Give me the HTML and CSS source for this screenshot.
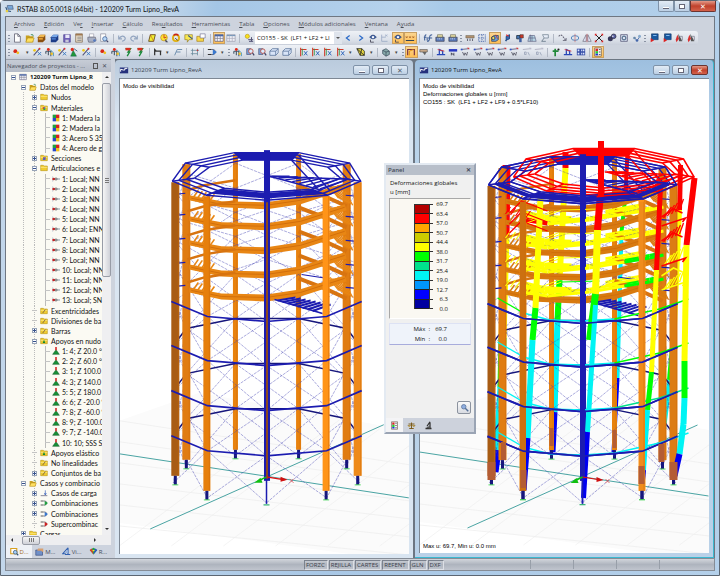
FILE: index.html
```html
<!DOCTYPE html>
<html lang="es">
<head>
<meta charset="utf-8">
<title>RSTAB 8.05.0018 (64bit) - 120209 Turm Lipno_RevA</title>
<link rel="stylesheet" href="styles.css">
</head>
<body>
<svg class="defs" aria-hidden="true">
  <symbol id="new" viewBox="0 0 12 12"><path d="M3 1h4l3 3v7H3z" fill="#fff" stroke="#667"/><path d="M7 1v3h3" fill="none" stroke="#667"/></symbol>
  <symbol id="open" viewBox="0 0 12 12"><path d="M1 3h4l1 1h4v7H1z" fill="#c8a020"/><path d="M3 6h8l-2 5H1z" fill="#ffe060" stroke="#a88010" stroke-width=".6"/><path d="M7 2q3-1 3 2" fill="none" stroke="#385"/></symbol>
  <symbol id="boxo" viewBox="0 0 12 12"><path d="M1 5l3-3h6v6l-3 3H1z" fill="#8a5010"/><path d="M1 5l3-3h6L8 5z" fill="#f0b850"/><path d="M2 6h5v2H2z" fill="#e8a030"/></symbol>
  <symbol id="boxb" viewBox="0 0 12 12"><path d="M1 5l3-3h6v6l-3 3H1z" fill="#1c3c88"/><path d="M1 5l3-3h6L8 5z" fill="#78a8e8"/><path d="M2 6h5v2H2z" fill="#4878c8"/></symbol>
  <symbol id="save" viewBox="0 0 12 12"><path d="M2 2h8v9H2z" fill="#7060b8" stroke="#443888" stroke-width=".7"/><path d="M4 2h5v4H4z" fill="#e8e8f8"/><path d="M4 8h4v3H4z" fill="#c8c8d8"/></symbol>
  <symbol id="clip" viewBox="0 0 12 12"><path d="M2 1h8v10H2z" fill="#e8dcc8" stroke="#786048" stroke-width=".8"/><path d="M2 1h8v2H2z" fill="#a07850"/><path d="M4 5h5M4 7h5M4 9h5" stroke="#888"/></symbol>
  <symbol id="print" viewBox="0 0 12 12"><path d="M3 1h5v4H3z" fill="#fff" stroke="#889" stroke-width=".6"/><path d="M1 5h9l1 4-3 2H2L1 8z" fill="#a8b0c4" stroke="#556" stroke-width=".7"/><circle cx="9" cy="9" r="1.6" fill="#557ac0"/></symbol>
  <symbol id="preview" viewBox="0 0 12 12"><path d="M2 1h6v9H2z" fill="#fff" stroke="#778" stroke-width=".7"/><circle cx="7" cy="7" r="2.6" fill="#b8d8f8" stroke="#46689c"/><path d="M9 9l2 2" stroke="#446" stroke-width="1.4"/></symbol>
  <symbol id="undo" viewBox="0 0 12 12"><path d="M2 3v4h4M2 7q5-6 8-1q0 3-4 4" fill="none" stroke="#93a5c0" stroke-width="1.3"/></symbol>
  <symbol id="redo" viewBox="0 0 12 12"><path d="M10 3v4H6M10 7Q5 1 2 6q0 3 4 4" fill="none" stroke="#93a5c0" stroke-width="1.3"/></symbol>
  <symbol id="para" viewBox="0 0 12 12"><path d="M4 2h6L8 10H2z" fill="#f0f030" stroke="#604010"/><path d="M4 2l4 8" stroke="#c03020" stroke-width=".6"/></symbol>
  <symbol id="sun" viewBox="0 0 12 12"><circle cx="6" cy="5.500" r="4" fill="#ffe030" stroke="#b89020" stroke-width=".8"/><path d="M6 2v4l3-1" stroke="#c03020" fill="none"/><path d="M7 7l4 4-3 0z" fill="#445"/></symbol>
  <symbol id="ring" viewBox="0 0 12 12"><circle cx="6" cy="6" r="3.700" fill="none" stroke="#e0b010" stroke-width="2.200"/><path d="M3 3q3-3 6 0" fill="none" stroke="#c82018" stroke-width="1.600"/><path d="M5 6l3 3" stroke="#333"/></symbol>
  <symbol id="note" viewBox="0 0 12 12"><path d="M1 2h9v6H6l-2 3V8H1z" fill="#f8e850" stroke="#887020" stroke-width=".7"/><path d="M5 3l5 4" stroke="#358" stroke-width="1.300"/></symbol>
  <symbol id="fwin" viewBox="0 0 12 12"><path d="M1 4h8v6H1z" fill="#f8d848" stroke="#a88018" stroke-width=".8"/><path d="M5 1h6v5H5z" fill="#fff" stroke="#668" stroke-width=".7"/></symbol>
  <symbol id="table" viewBox="0 0 12 12"><path d="M1 2h10v8H1z" fill="#f8f8ff" stroke="#557" stroke-width=".8"/><path d="M1 3h10" stroke="#46a" stroke-width="2"/><path d="M4 3v7M7.500 3v7M1 6.500h10" stroke="#778" stroke-width=".8"/></symbol>
  <symbol id="tablex" viewBox="0 0 12 12"><path d="M1 2h10v8H1z" fill="#eef0f6" stroke="#99a" stroke-width=".8"/><path d="M1 3h10" stroke="#79b" stroke-width="1.500"/><path d="M4 3v7M7.500 3v7M1 6.500h10" stroke="#aab" stroke-width=".8"/></symbol>
  <symbol id="lamp" viewBox="0 0 12 12"><circle cx="4" cy="4" r="2.500" fill="#f8e020" stroke="#a80" stroke-width=".6"/><path d="M5 8h6M6 10h5M9 5v5" stroke="#557" stroke-width="1.200"/></symbol>
  <symbol id="prev" viewBox="0 0 12 12"><path d="M8 3L4 6l4 3" fill="none" stroke="#2868c8" stroke-width="1.400"/></symbol>
  <symbol id="next" viewBox="0 0 12 12"><path d="M4 3l4 3-4 3" fill="none" stroke="#2868c8" stroke-width="1.400"/></symbol>
  <symbol id="eye" viewBox="0 0 12 12"><path d="M2 5q4-5 8 0q-4 4-8 0z" fill="#4868a8" stroke="#223c70" stroke-width=".8"/><circle cx="6" cy="5" r="1.300" fill="#fff"/><path d="M3 8v3h4" stroke="#445" fill="none"/></symbol>
  <symbol id="val" viewBox="0 0 12 12"><path d="M1 4l2 2M3 4L1 6M5 4l2 2M7 4L5 6M9 4l2 2M11 4L9 6" stroke="#a05820" stroke-width=".9"/><path d="M1 9h10" stroke="#345" stroke-width="1.200"/></symbol>
  <symbol id="xy" viewBox="0 0 12 12"><path d="M2 2v8h7M2 5h5" stroke="#9aaac4" fill="none"/><path d="M6 2l3 2M9 2L6 4" stroke="#9aaac4" stroke-width=".8"/></symbol>
  <symbol id="fx" viewBox="0 0 12 12"><path d="M4 2q-2 0-2 4v3M1 5h3M5 10q3 0 3-5q0-3 3-3M6 6h5M5 5v4" fill="none" stroke="#406098" stroke-width="1.300"/></symbol>
  <symbol id="cast" viewBox="0 0 12 12"><path d="M1 5h10v5H1z" fill="#5878b8" stroke="#334" stroke-width=".7"/><path d="M3 2h6v3H3z" fill="#e0d8a0" stroke="#554" stroke-width=".6"/><path d="M3 7h6" stroke="#fff" stroke-dasharray="1 1"/></symbol>
  <symbol id="wall" viewBox="0 0 12 12"><path d="M1 3h10v3H1z" fill="#b09070" stroke="#554" stroke-width=".5"/><path d="M3 7v3M6 7v3M9 7v3" stroke="#445" stroke-width="1.300" stroke-dasharray="1 .6"/></symbol>
  <symbol id="frame" viewBox="0 0 12 12"><path d="M2 2h8v8H2zM2 6h8M6 2v8" fill="none" stroke="#46a" stroke-dasharray="1.500 1"/></symbol>
  <symbol id="glass" viewBox="0 0 12 12"><path d="M2 5l3-2h5v5l-3 2H2z" fill="#68a0d8" stroke="#235" stroke-width=".8"/><circle cx="4" cy="6" r="2" fill="#e8e060" stroke="#335"/><path d="M7 2l2 5" stroke="#c33"/></symbol>
  <symbol id="bee" viewBox="0 0 12 12"><path d="M5 10V4l4-2v5l-5 2" fill="#3868b0" stroke="#123c78"/><path d="M5 2l3 2" stroke="#d33" stroke-width="1.500"/></symbol>
  <symbol id="cubes" viewBox="0 0 12 12"><path d="M2 3h4v4H2z" fill="#4878b8" stroke="#234"/><path d="M6 2h4v4H6z" fill="#c83828" stroke="#333" stroke-width=".6"/><path d="M5 6h3v5H5z" fill="#4060a0"/></symbol>
  <symbol id="grid" viewBox="0 0 12 12"><path d="M3 3h6l2 7H1zM6 3v7M2 6h8M4 2v8" fill="#b8d8e8" stroke="#557" stroke-width=".7"/></symbol>
  <symbol id="flag" viewBox="0 0 12 12"><path d="M3 2h7v4H5z" fill="#e8eef8" stroke="#678" stroke-width=".8"/><path d="M5 6l-3 4h5" fill="none" stroke="#678"/></symbol>
  <symbol id="chain" viewBox="0 0 12 12"><path d="M2 4q3-3 5 0t4 5" fill="none" stroke="#667" stroke-dasharray="2 1" stroke-width="1.300"/><path d="M7 9h4V6" fill="none" stroke="#667"/></symbol>
  <symbol id="rot" viewBox="0 0 12 12"><ellipse cx="6" cy="6" rx="4.500" ry="2.800" fill="none" stroke="#5888c0" stroke-width="1.200"/><path d="M6 1v10" stroke="#c66" stroke-width=".8"/></symbol>
  <symbol id="mirror" viewBox="0 0 12 12"><path d="M5 2v8H1zM7 2v8h4z" fill="#eef" stroke="#667" stroke-width=".8"/><path d="M6 1v10" stroke="#c44" stroke-width=".7"/></symbol>
  <symbol id="cross" viewBox="0 0 12 12"><path d="M2 2l8 8M10 2l-8 8" stroke="#222" stroke-width="1.200"/><path d="M1 1h2v2H1zM9 1h2v2H9zM1 9h2v2H1zM9 9h2v2H9z" fill="#d22"/></symbol>
  <symbol id="balls" viewBox="0 0 12 12"><circle cx="4" cy="7" r="3" fill="#383858"/><circle cx="8" cy="4" r="2.800" fill="#5860a0" stroke="#223" stroke-width=".8"/><circle cx="7" cy="4" r="1" fill="#dde"/></symbol>
  <symbol id="swirl" viewBox="0 0 12 12"><path d="M2 2h8v8H2z" fill="#d8e0f0" stroke="#446" stroke-width=".8"/><circle cx="6" cy="6" r="2.300" fill="none" stroke="#246"/></symbol>
  <symbol id="nodes" viewBox="0 0 12 12"><path d="M3 6l3 3 3-4" stroke="#46a" fill="none"/><circle cx="3" cy="6" r="1.600" fill="#68a"/><circle cx="6" cy="9" r="1.600" fill="#46a"/><circle cx="9" cy="4" r="1.800" fill="#8ac"/></symbol>
  <symbol id="mon" viewBox="0 0 12 12"><path d="M3 1h8v7H3z" fill="#1858a0" stroke="#0c3060" stroke-width=".7"/><path d="M5 3h4" stroke="#9cf"/><path d="M2 6l4 3-4 2z" fill="#d22"/></symbol>
  <symbol id="pin" viewBox="0 0 12 12"><path d="M5 1l3 5 2 4H6z" fill="#555"/><path d="M4 2l2 5-3 4-1-3z" fill="#d83030"/><path d="M7 4h3v5" stroke="#889" fill="none"/></symbol>
  <symbol id="node" viewBox="0 0 12 12"><circle cx="4" cy="5" r="2.300" fill="#d82818"/><circle cx="7" cy="7" r="1.600" fill="#f0c020"/></symbol>
  <symbol id="barx" viewBox="0 0 12 12"><path d="M2 10L9 2" stroke="#557" stroke-width="1.300"/><circle cx="3" cy="4" r="1.600" fill="#f0c818"/><path d="M7 6l4 4M11 6l-4 4" stroke="#3878c0" stroke-width="1.100"/><circle cx="9" cy="2" r="1.200" fill="#d33"/></symbol>
  <symbol id="sup" viewBox="0 0 12 12"><path d="M5 4l4 7H2z" fill="#209838" stroke="#155" stroke-width=".5"/><circle cx="4" cy="3" r="2" fill="#d83020"/><path d="M6 2l4 3" stroke="#357"/></symbol>
  <symbol id="struct" viewBox="0 0 12 12"><path d="M1 5h6v6M1 5v3M4 5v5" stroke="#456" fill="none" stroke-width="1.300"/><path d="M6 3l4 4v4" stroke="#38a" fill="none"/><circle cx="4" cy="3" r="1.700" fill="#e02818"/><circle cx="8" cy="8" r="1.500" fill="#f0c020"/></symbol>
  <symbol id="bolt" viewBox="0 0 12 12"><path d="M3 2h6L6 6h2l-3 5" fill="none" stroke="#188838" stroke-width="1.600"/><path d="M3 1h6v3H3z" fill="#d83020"/></symbol>
  <symbol id="dim" viewBox="0 0 12 12"><path d="M2 10V3l2 2h5v5M2 5h8" stroke="#333" fill="none" stroke-width="1.500"/></symbol>
  <symbol id="lin" viewBox="0 0 12 12"><path d="M2 10l3-7h6M4 6h5" stroke="#68a" fill="none" stroke-width="1.100"/></symbol>
  <symbol id="sel" viewBox="0 0 12 12"><path d="M3 2v8M9 2v8M1 4h10M1 8h8" stroke="#689" fill="none" stroke-width=".9"/><circle cx="9" cy="4" r="1" fill="#c33"/></symbol>
  <symbol id="comb" viewBox="0 0 12 12"><path d="M1 3h4M1 9h4" stroke="#333" stroke-width="1.200"/><path d="M5 3h2q3 0 3 3t-3 3H5" fill="none" stroke="#445"/><path d="M7 3l5 3-5 4z" fill="var(--c, #3878d0)"/></symbol>
  <symbol id="mag" viewBox="0 0 12 12"><path d="M2 2h5v7H2z" fill="#78a0d8" stroke="#335" stroke-width=".6"/><circle cx="7" cy="5" r="2.700" fill="#d8ecff" stroke="#c04838"/><path d="M9 7l2 3" stroke="#446" stroke-width="1.500"/></symbol>
  <symbol id="cube" viewBox="0 0 12 12"><path d="M1 5l3-3h7v5l-3 3H1zM1 5h7v5M8 5l3-3" fill="#d8e4f8" stroke="#557098" stroke-width=".9"/></symbol>
  <symbol id="axis" viewBox="0 0 12 12"><path d="M2 1v10M2 3h7" stroke="#d03828" fill="none" stroke-width="1.300"/><path d="M4 2v8" stroke="#309848"/><path d="M6 5l4 5M10 5l-4 5" stroke="#2860b8" stroke-width="1.100"/></symbol>
  <symbol id="pers" viewBox="0 0 12 12"><path d="M1 2h6l3 3v5H5z" fill="#e8d840" stroke="#332"/><path d="M1 2l9 8M7 2L5 10" stroke="#222"/></symbol>
  <symbol id="rend" viewBox="0 0 12 12"><path d="M2 4l4-2 4 3v4l-4 2-4-3z" fill="#8aa" stroke="#345" stroke-width=".8"/><path d="M2 4l4 2 4-1M6 6v5" stroke="#345" stroke-width=".8" fill="none"/></symbol>
  <symbol id="portal" viewBox="0 0 12 12"><path d="M2 10V3h8v7" fill="none" stroke="#734" stroke-width="1.400"/><path d="M4 10V5l5-2" fill="none" stroke="#d80"/></symbol>
  <symbol id="load" viewBox="0 0 12 12"><path d="M1 3h9v3H1z" fill="#c8a888" stroke="#555" stroke-width=".7"/><path d="M4 6l3 4 2-4" fill="#666"/></symbol>
  <symbol id="res" viewBox="0 0 12 12"><path d="M1 3l10-1" stroke="#557"/><path d="M8 1h3v2z" fill="#d33"/><path d="M1 2h2v2H1z" fill="#35c"/><path d="M3 6l2 4 1-3 2 3 1-4" fill="none" stroke="#445" stroke-width=".9"/></symbol>
  <symbol id="resg" viewBox="0 0 12 12"><path d="M1 3l10-1" stroke="#aab"/><path d="M8 1h3v2z" fill="#bbc"/><path d="M3 6h2v3H3zM7 6l2 4" fill="none" stroke="#9aa4b8"/></symbol>
  <symbol id="beamt" viewBox="0 0 12 12"><path d="M1 9h10M4 9V3l4 2v4" stroke="#2848b8" fill="none" stroke-width="1.500"/><path d="M2 3l8 2" stroke="#d33"/></symbol>
  <symbol id="beamn" viewBox="0 0 12 12"><path d="M1 4h10" stroke="#2838c0" stroke-width="3"/><path d="M4 10V7l3 3V7" stroke="#334" fill="none"/></symbol>
  <symbol id="plus" viewBox="0 0 12 12"><path d="M5 2v9M2 5h7" stroke="#208838" stroke-width="2"/><circle cx="9" cy="3" r="1.300" fill="#222"/></symbol>
  <symbol id="tiles" viewBox="0 0 12 12"><path d="M1 2h10v8H1z" fill="#3850a8"/><path d="M2 3h2v2H2zM6 3h1v2H6zM8 3h2v2H8zM2 7h2v2H2zM6 7h1v2H6zM8 7h2v2H8z" fill="#dde6ff"/></symbol>
  <symbol id="legend" viewBox="0 0 12 12"><path d="M2 1h8v10H2z" fill="#f4f4f4" stroke="#654" stroke-width=".8"/><path d="M3 2h3v3H3z" fill="#d22"/><path d="M3 5h3v3H3z" fill="#2c3"/><path d="M3 8h3v2H3z" fill="#23d"/><path d="M7 3h2M7 6h2M7 9h2" stroke="#444"/></symbol>
  <symbol id="folder" viewBox="0 0 12 12"><path d="M1 2h4l1 1h5v7H1z" fill="#f0cc30" stroke="#b08c10" stroke-width=".8"/><path d="M1 5h10" stroke="#fff0a0"/></symbol>
  <symbol id="fmat" viewBox="0 0 12 12"><use href="#folder"/><path d="M4 5h2v2H4z" fill="#c22"/><path d="M6 5h2v2H6z" fill="#35c"/><path d="M5 7h3v2H5z" fill="#2a4"/></symbol>
  <symbol id="fpen" viewBox="0 0 12 12"><use href="#folder"/><path d="M4 9l4-5" stroke="#654" stroke-width="1.200"/></symbol>
  <symbol id="fsec" viewBox="0 0 12 12"><use href="#folder"/><path d="M4 9l1-4h4l-1 4z" fill="#46c"/><path d="M5 5l3 3" stroke="#d33"/></symbol>
  <symbol id="fsup" viewBox="0 0 12 12"><use href="#folder"/><path d="M6 4l2 5H4z" fill="#183"/></symbol>
  <symbol id="mat" viewBox="0 0 12 12"><rect x="1" y="1" width="5" height="5" fill="#20a040"/><rect x="6" y="1" width="5" height="5" fill="#d82020"/><rect x="1" y="6" width="5" height="5" fill="#2848c8"/><rect x="6" y="6" width="5" height="5" fill="#f0c020"/></symbol>
  <symbol id="hinge" viewBox="0 0 12 12"><path d="M1 6h11" stroke="#89a" stroke-width="1.500"/><path d="M1 2v8" stroke="#9ab" stroke-width=".8"/><circle cx="2.500" cy="6" r="2" fill="#d02020"/><circle cx="6" cy="6" r="1.600" fill="#fff" stroke="#333"/></symbol>
  <symbol id="cone" viewBox="0 0 12 12"><path d="M6 4l5 7H1z" fill="#189038" stroke="#155c28" stroke-width=".8"/><path d="M6 0v5" stroke="#d82828" stroke-width="2.400"/></symbol>
  <symbol id="case" viewBox="0 0 12 12"><path d="M1 10h10" stroke="#889" stroke-width="1.500"/><path d="M8 2v7M6.500 6L8 9l1.500-3" stroke="#345cb8" fill="none"/></symbol>
  <symbol id="app" viewBox="0 0 12 12"><path d="M1 3h10v7H1z" fill="#24307c"/><path d="M2 8V5l3 1h2V4h3" stroke="#fff" fill="none" stroke-width="1.200"/></symbol>
  <symbol id="prog" viewBox="0 0 12 12"><path d="M3 2h7l1 5H4z" fill="#78a8d8" stroke="#346" stroke-width=".7"/><path d="M1 4l2 5 5 1" stroke="#357" fill="none" stroke-width="1.400"/><path d="M1 8h3v3H1z" fill="#e8d040"/></symbol>
  <symbol id="balance" viewBox="0 0 12 12"><path d="M6 2v8M3 10h6M2 4h8" stroke="#765410" stroke-width="1.200"/><path d="M1 6h4q-2 3-4 0M7 6h4q-2 3-4 0" fill="#e0b830" stroke="#765410" stroke-width=".5"/></symbol>
  <symbol id="micro" viewBox="0 0 12 12"><path d="M8 1L4 7M2 10h8M8 2v8" stroke="#333" stroke-width="1.700"/><path d="M3 9l5-3v4z" fill="#555"/></symbol>
  <symbol id="zoomg" viewBox="0 0 12 12"><circle cx="5" cy="5" r="3" fill="#90aee0" stroke="#567098"/><path d="M7 7l4 4" stroke="#567098" stroke-width="1.800"/></symbol>
  <symbol id="data" viewBox="0 0 12 12"><path d="M1 2h8v7H1z" fill="#fff" stroke="#d8a020" stroke-width="1.500"/><circle cx="7" cy="7" r="2.500" fill="#a8d0f8" stroke="#357"/><path d="M9 9l2 2" stroke="#357" stroke-width="1.500"/></symbol>
  <symbol id="disp" viewBox="0 0 12 12"><path d="M1 4h9v7H1z" fill="#7090c8" stroke="#347" stroke-width=".8"/><path d="M4 2h7v5l-3-2H3z" fill="#d8a070"/></symbol>
  <symbol id="view" viewBox="0 0 12 12"><path d="M8 1L1 9h4M8 1v9M4 10h7" stroke="#3060b0" fill="none" stroke-width="1.500"/><path d="M8 3l-4 5h4z" fill="#90b0e0"/></symbol>
  <symbol id="gem" viewBox="0 0 12 12"><path d="M1 4l5-3 5 3-5 6z" fill="#28a048"/><path d="M1 4l3-2 2 8z" fill="#e03828"/><path d="M8 2l3 2-5 6z" fill="#2850c8"/><path d="M4 4h4L6 6z" fill="#f8e030"/></symbol>
</svg>

<div class="app">
  <header class="titlebar">
    <svg class="ico"><use href="#prog"/></svg>
    <h1>RSTAB 8.05.0018 (64bit) - 120209 Turm Lipno_RevA</h1>
    <div class="winbtns main-btns"><button aria-label="Minimizar"><i class="g-min"></i></button><button aria-label="Restaurar"><i class="g-max"></i></button><button class="close" aria-label="Cerrar">✕</button></div>
  </header>

  <div class="body">
    <nav class="menubar" aria-label="Menú">
      <button><u>A</u>rchivo</button><button><u>E</u>dición</button><button>Ve<u>r</u></button><button><u>I</u>nsertar</button><button><u>C</u>álculo</button><button>Res<u>u</u>ltados</button><button><u>H</u>erramientas</button><button><u>T</u>abla</button><button><u>O</u>pciones</button><button><u>M</u>ódulos adicionales</button><button><u>V</u>entana</button><button>A<u>y</u>uda</button>
    </nav>
    <div class="toolbar t1" id="bar1" role="toolbar" aria-label="Estándar"></div>
    <div class="toolbar t2" id="bar2" role="toolbar" aria-label="Vista"></div>

    <main class="work">
      <aside class="nav">
        <div class="nav-head"><h2>Navegador de proyectos - ...</h2><button class="pinb" aria-label="Fijar"></button><button aria-label="Cerrar navegador">✕</button></div>
        <div class="nav-mid">
          <div class="tree-clip"><ul class="tree" id="tree"></ul></div>
          <div class="vscroll"><i class="up"></i><i class="thumb"></i><i class="down"></i></div>
        </div>
        <div class="hscroll"><i class="left"></i><i class="hthumb"></i><i class="right"></i></div>
        <div class="nav-tabs"><button class="on"><svg class="ico"><use href="#data"/></svg>D...</button><button><svg class="ico"><use href="#disp"/></svg>M...</button><button><svg class="ico"><use href="#view"/></svg>Vi...</button><button><svg class="ico"><use href="#gem"/></svg>R...</button></div>
      </aside>

      <div class="mdi">
        <section class="doc">
          <header><svg class="ico"><use href="#app"/></svg><h2>120209 Turm Lipno_RevA</h2><div class="winbtns"><button aria-label="Minimizar"><i class="g-min"></i></button><button aria-label="Maximizar"><i class="g-max"></i></button><button aria-label="Cerrar">✕</button></div></header>
          <div class="canvas"><svg id="modelA" viewBox="120 79 290 474" preserveAspectRatio="xMidYMid slice"></svg><div class="notes"><p>Modo de visibilidad</p></div></div>
        </section>
        <section class="doc active">
          <header><svg class="ico"><use href="#app"/></svg><h2>120209 Turm Lipno_RevA</h2><div class="winbtns"><button aria-label="Minimizar"><i class="g-min"></i></button><button aria-label="Maximizar"><i class="g-max"></i></button><button class="close" aria-label="Cerrar">✕</button></div></header>
          <div class="canvas"><svg id="modelB" viewBox="420 79 290 474" preserveAspectRatio="xMidYMid slice"></svg><div class="notes"><p>Modo de visibilidad</p><p>Deformaciones globales u [mm]</p><p>CO155 : SK&nbsp; (LF1 + LF2 + LF9 + 0.5*LF10)</p><p class="foot">Max u: 69.7, Min u: 0.0 mm</p></div></div>
        </section>

        <section class="panel">
          <header><h2>Panel</h2><button aria-label="Cerrar panel">✕</button></header>
          <div class="panel-body">
            <p>Deformaciones globales</p><p>u [mm]</p>
            <div class="legend"><div class="colors" id="colors"></div><ul id="ticks"></ul></div>
            <dl class="minmax"><dt>Máx&nbsp; :</dt><dd>69.7</dd><dt>Mín&nbsp; :</dt><dd>0.0</dd></dl>
            <button class="zoomb" aria-label="Ampliar"><svg class="ico"><use href="#zoomg"/></svg></button>
          </div>
          <div class="panel-tabs"><button class="on" aria-label="Colores"><svg class="ico"><use href="#legend"/></svg></button><button aria-label="Factores"><svg class="ico"><use href="#balance"/></svg></button><button aria-label="Filtro"><svg class="ico"><use href="#micro"/></svg></button></div>
        </section>
      </div>
    </main>
  </div>

  <footer class="status"><span>FORZC</span><span>REJILLA</span><span>CARTES</span><span>REFENT</span><span>GLN</span><span>DXF</span><b></b><b></b><b></b><b></b></footer>
</div>
<script src="app.js"></script>
</body>
</html>
```
FILE: styles.css
```css
* { box-sizing: border-box; }
html, body { height: 100%; margin: 0; }
body { font: 6px/8px "Open Sans", "Noto Sans", sans-serif; color: #222; overflow: hidden; }
button { font: inherit; color: inherit; background: none; border: 0; padding: 0; margin: 0; display: flex; align-items: center; justify-content: center; }
h1, h2, p, ul, dl, dd { margin: 0; padding: 0; font: inherit; list-style: none; }
.defs { display: none; }
.ico { width: 9px; height: 9px; flex: none; }

.app { height: 100%; display: flex; flex-direction: column; padding: 0 4px 4px; border: 1px solid #5c6672; border-radius: 4px 4px 0 0; background: linear-gradient(90deg, #c2d6ea, #a9c8e6 45%, #b4d0ea); }
.titlebar { height: 15px; flex: none; display: flex; align-items: center; gap: 3px; margin: 0 -4px; padding-left: 4px; background: linear-gradient(100deg, #d0deeb 0, #c3d7ea 22%, #a4c6e6 30%, #b6d2ec 55%, #a8cae8 62%, #b4d0ea); }
.titlebar h1 { flex: 1; color: #111; font-family: Lato, "Open Sans", sans-serif; font-size: 7px; }
.winbtns { display: flex; gap: 2px; color: #555c68; }
.winbtns button { width: 17px; height: 9px; border: 1px solid #7f92a8; border-radius: 2px; background: linear-gradient(#e2ebf5, #bccfe4); font-size: 7px; line-height: 7px; }
.winbtns .close { background: linear-gradient(#e49a88, #c0412c 50%, #d4614a); color: #fff; border-color: #6c3430; }
.main-btns { align-self: flex-start; gap: 0; margin-right: 3px; }
.main-btns button { height: 11px; width: 16px; border-top: 0; border-radius: 0 0 2px 2px; }
.main-btns .close { width: 26px; }
.g-min { width: 6px; height: 2px; background: #fff; border: 1px solid #667; border-width: 0 0 1px; margin-top: 3px; }
.g-max { width: 6px; height: 5px; background: #fff; border: 1px solid #667; }

.body { flex: 1; min-height: 0; display: flex; flex-direction: column; border: 1px solid #6f7782; border-bottom: 0; background: #cdd3dd; }
.menubar { height: 14px; flex: none; display: flex; align-items: center; gap: 9px; padding-left: 8px; color: #4b4f58; }
.toolbar { height: 14px; flex: none; display: flex; align-items: center; border-radius: 0 3px 3px 0; background: linear-gradient(#eef1f6, #dde2ea 60%, #c9cfda); }
.t1 { margin-right: 16px; }
.t2 { margin-right: 110px; }
.toolbar button { flex: 1 1 12px; min-width: 0; height: 12px; }
.toolbar button.hl { background: linear-gradient(#fbd590, #ffbf55); border: 1px solid #c9a062; }
.toolbar .ico { width: 10px; height: 10px; }
.toolbar .sep { width: 5px; flex: none; height: 9px; background: linear-gradient(#b2b9c5, #b2b9c5) center / 1px 100% no-repeat; }
.toolbar .grip { width: 5px; flex: none; height: 9px; background: radial-gradient(#8a93a3 40%, transparent 50%) center / 2px 3px repeat-y; }
.toolbar .drop { flex: 0 0 8px; font-size: 5px; color: #444; }
.toolbar select { width: 87px; height: 12px; appearance: none; border: 0; border-right: 8px solid #dfe4ec; padding: 0 0 0 2px; color: #111; font: inherit; background: #fff; }
.combo { position: relative; display: flex; flex: none; }
.combo i { position: absolute; right: 2px; top: 5px; border: 2px solid transparent; border-top-color: #555; }

.work { flex: 1; min-height: 0; display: flex; gap: 4px; }
.nav { width: 105px; flex: none; display: flex; flex-direction: column; background: #f2f2f2; border-top: 1px solid #9aa2ae; }
.nav-head { height: 12px; flex: none; display: flex; align-items: center; background: linear-gradient(#c6ccd6, #b4bbc7); color: #4a505c; padding: 0 2px 0 1px; }
.nav-head h2 { flex: 1; white-space: nowrap; }
.nav-head button { width: 9px; }
.pinb::before { content: ""; width: 3px; height: 4px; border: 1px solid #555; }
.nav-mid { flex: 1; min-height: 0; display: flex; }
.tree-clip { flex: 1; min-width: 0; overflow: hidden; background: #fbfaf3; }
.tree { height: calc(100% + 4px); display: grid; grid-auto-rows: 1fr; font-size: 7px; line-height: 10px; color: #111; font-family: Lato, "Open Sans", sans-serif; --rail: repeating-linear-gradient(#bbb 0 1px, transparent 1px 2px); }
.tree li { display: flex; align-items: center; white-space: nowrap; gap: 3px; background: var(--rail) 17px 0 / 1px 100% no-repeat, var(--rail) 28px 0 / 1px 100% no-repeat; }
.tree li.root { font-family: "Open Sans", sans-serif; font-size: 6px; font-weight: 700; background: none; }
.tree li.d1 { background: none; }
.tree li.d3 { gap: 2px; background: var(--rail) 17px 0 / 1px 100% no-repeat, var(--rail) 28px 0 / 1px 100% no-repeat, linear-gradient(#bbb, #bbb) 39px 0 / 1px 100% no-repeat; }
.root { padding-left: 5px; } .d1 { padding-left: 15px; } .d2 { padding-left: 26px; } .d3 { padding-left: 39px; }
.tree .ico { width: 8px; height: 8px; }
.tree .box { width: 5px; height: 5px; flex: none; border: 1px solid #98a4b8; background: linear-gradient(#35508c, #35508c) center / 3px 1px no-repeat, #fff; }
.tree .box.p { background: linear-gradient(#35508c, #35508c) center / 3px 1px no-repeat, linear-gradient(#35508c, #35508c) center / 1px 3px no-repeat, #fff; }
.tree .dash { width: 5px; height: 1px; flex: none; background: #c4c4c4; }
.vscroll { width: 9px; flex: none; display: flex; flex-direction: column; align-items: center; background: #efeff1; }
.up, .down, .left, .right { border: 2px solid transparent; flex: none; }
.up { border-bottom-color: #333; margin: 2px 0 5px; } .down { border-top-color: #333; margin: auto 0 3px; }
.left { border-right-color: #333; margin: 0 9px 0 3px; } .right { border-left-color: #333; margin: 0 13px 0 auto; }
.thumb { height: 42%; width: 9px; border: 1px solid #989ca6; border-radius: 2px; background: repeating-linear-gradient(#777 0 1px, transparent 1px 2px) center / 4px 5px no-repeat, linear-gradient(90deg, #f6f6f6, #cfd1d8); }
.hscroll { height: 10px; flex: none; display: flex; align-items: center; background: #eeeef0; }
.hthumb { width: 18px; height: 9px; border: 1px solid #989ca6; border-radius: 2px; background: repeating-linear-gradient(90deg, #777 0 1px, transparent 1px 2px) center / 5px 4px no-repeat, linear-gradient(#f6f6f6, #cfd1d8); }
.nav-tabs { height: 13px; flex: none; display: flex; background: #cdd3de; color: #444a58; }
.nav-tabs button { flex: 1; gap: 1px; }
.nav-tabs .on { background: #eef1f6; color: #a06818; }

.mdi { flex: 1; min-width: 0; position: relative; display: flex; gap: 2px; background: #6c7682; padding-top: 1px; }
.doc { flex: 1; min-width: 0; display: flex; flex-direction: column; padding: 0 4px 4px; border-radius: 4px 4px 0 0; background: linear-gradient(#bacbdd, #d9e5f1 12%, #d9e5f1); }
.doc.active { background: linear-gradient(#9dbfdf, #b9d3ea 12%, #b9d1e8); border: solid #3cb8d0; border-width: 0 1px 1px 0; }
.doc header { height: 18px; flex: none; display: flex; align-items: center; gap: 2px; padding-top: 2px; color: #39424e; }
.doc.active header { color: #111; }
.doc header h2 { flex: 1; }
.doc .ico { width: 10px; height: 10px; }
.doc .winbtns { padding-right: 1px; }
.doc .winbtns button { height: 10px; }
.canvas { flex: 1; min-height: 0; display: grid; background: #fff; border: 1px solid #7e8894; border-width: 1px 0 0 1px; }
.canvas > * { grid-area: 1 / 1; min-width: 0; min-height: 0; width: 100%; height: 100%; }
.notes { display: flex; flex-direction: column; padding: 3px; font-family: "Liberation Sans", sans-serif; color: #000; }
.notes .foot { margin-top: auto; }

.panel { position: absolute; left: 269px; top: 104px; width: 92px; height: 271px; display: flex; flex-direction: column; border: 2px solid #e3eaf2; border-right-color: #9aa4b4; border-bottom-color: #9aa4b4; background: #f0f0f0; }
.panel header { height: 10px; flex: none; display: flex; align-items: center; justify-content: space-between; padding: 0 3px 0 2px; background: #b8bfca; font-weight: 600; color: #444a56; }
.panel-body { flex: 1; display: flex; flex-direction: column; padding: 4px 3px; color: #111; }
.panel-body p { padding-left: 1px; line-height: 9px; }
.legend { display: flex; height: 121px; margin-top: 1px; padding: 1px 0 5px 24px; background: #faf8f2; border: 1px solid #a8a8a8; border-right-color: #fff; border-bottom-color: #fff; }
.colors { width: 16px; display: flex; flex-direction: column; margin: 4px 0; border: solid #333; border-width: 1px 1px 0; }
.colors i { flex: 1; border-bottom: 1px solid #222; }
.legend ul { display: flex; flex-direction: column; justify-content: space-between; }
.legend li { display: flex; align-items: center; justify-content: space-between; width: 18px; line-height: 8px; }
.legend li::before { content: ""; width: 3px; height: 1px; background: #333; }
.minmax { display: grid; grid-template-columns: 40px 17px; text-align: right; line-height: 10px; margin-top: 4px; background: #eff3fa; border: 1px solid #dde2f4; border-bottom-color: #a8acdc; }
.zoomb { width: 14px; height: 13px; margin: auto 0 0 auto; border: 1px solid #8c939f; border-radius: 2px; background: linear-gradient(#fafafa, #d8dbe2); }
.panel-tabs { height: 14px; flex: none; display: flex; background: #cdd2dc; }
.panel-tabs button { width: 17px; }
.panel-tabs .on { background: #f4f4f6; }

.status { height: 13px; flex: none; display: flex; align-items: center; padding-left: 298px; gap: 1px; background: linear-gradient(#d2d6dc, #aeb4be 50%, #c0c5ce); border: 1px solid #858c96; color: #3c414a; }
.status span { height: 10px; padding: 0 2px 0 1px; line-height: 9px; border: 1px solid #7b828e; border-right-color: #dde0e6; border-bottom-color: #dde0e6; }
.status b { width: 42px; height: 9px; border-right: 1px solid #989fa9; }
.status b:first-of-type { width: 86px; }
```
FILE: app.js
```js
// ---------- toolbars ----------
const COMBO = '<label class="combo"><select aria-label="Caso de carga"><option>CO155 - SK&nbsp; (LF1 + LF2 + LI</option></select><i></i></label>';
// "|" separator, ":" grip, "v" drop-down arrow, "*" suffix marks an active button
const bars = {
  bar1: ': new open boxo boxb save clip print preview | undo redo | para sun ring note fwin | table* tablex | lamp COMBO prev next eye xy eye* val* | fx cast cast : wall frame glass* bee cubes grid flag | chain rot mirror cross balls swirl nodes : mon mon pin pin',
  bar2: ': node v barx struct barx sup barx | node struct bolt bolt | dim v lin | sel | comb v : struct mag mag cube cube | axis axis axis axis v pers v | rend v : portal* load | beamt beamn res res res res res resg resg | plus beamt tiles | legend*'
};
for (const [id, spec] of Object.entries(bars)) {
  document.getElementById(id).innerHTML = spec.split(' ').map(t => {
    if (t === '|') return '<span class="sep"></span>';
    if (t === ':') return '<span class="grip"></span>';
    if (t === 'v') return '<button class="drop" aria-label="Más">▾</button>';
    if (t === 'COMBO') return COMBO;
    const on = t.endsWith('*'), n = t.replace('*', '');
    return `<button aria-label="${n}"${on ? ' class="hl"' : ''}><svg class="ico"><use href="#${n}"/></svg></button>`;
  }).join('');
}

// ---------- project tree: [depth, expander, icon, label] ----------
const rows = [
  [0, '-', 'table', '120209 Turm Lipno_R'], [1, '-', 'open', 'Datos del modelo'],
  [2, '+', 'folder', 'Nudos'], [2, '-', 'fmat', 'Materiales'],
  [3, '', 'mat', '1: Madera la'], [3, '', 'mat', '2: Madera la'], [3, '', 'mat', '3: Acero S 35'], [3, '', 'mat', '4: Acero de g'],
  [2, '+', 'fsec', 'Secciones'], [2, '-', 'folder', 'Articulaciones e'],
  ...['NN', 'NN', 'NN', 'NN', 'NN', 'ENN', 'NN', 'NN', 'NN', 'NN', 'NN', 'NN', 'SN'].map((s, i) => [3, '', 'hinge', `${i + 1}: Local; ${s}`]),
  [2, '', 'fpen', 'Excentricidades'], [2, '', 'fpen', 'Divisiones de ba'], [2, '+', 'fpen', 'Barras'], [2, '-', 'fsup', 'Apoyos en nudo'],
  ...['1: 4; Z 20.0 °;', '2: 2; Z 60.0 °;', '3: 1; Z 100.0', '4: 3; Z 140.0', '5: 5; Z 180.0', '6: 6; Z -20.0 °', '7: 8; Z -60.0 °', '8: 9; Z -100.0', '9: 7; Z -140.0', '10: 10; SSS S'].map(s => [3, '', 'cone', s]),
  [2, '', 'fsup', 'Apoyos elástico'], [2, '', 'fpen', 'No linealidades'], [2, '+', 'fpen', 'Conjuntos de ba'],
  [1, '-', 'open', 'Casos y combinacio'], [2, '+', 'case', 'Casos de carga'],
  [2, '+', 'comb', 'Combinaciones', '#20a040'], [2, '+', 'comb', 'Combinaciones', '#3878d0'], [2, '', 'comb', 'Supercombinac', '#d02020'],
  [1, '+', 'folder', 'Cargas']
];
document.getElementById('tree').innerHTML = rows.map(([d, x, ic, text, c]) => {
  const box = x ? `<span class="box${x === '+' ? ' p' : ''}"></span>` : '<span class="dash"></span>';
  return `<li class="${d ? 'd' + d : 'root'}">${box}<svg class="ico"${c ? ` style="--c:${c}"` : ''}><use href="#${ic}"/></svg>${text}</li>`;
}).join('');

// ---------- result legend ----------
document.getElementById('colors').innerHTML = ['#b40000', '#ff0000', '#ffa500', '#cccc00', '#ffff00', '#00ff00', '#00e08c', '#00f4f4', '#0096ff', '#0000ff', '#0000a0']
  .map(c => `<i style="background:${c}"></i>`).join('');
document.getElementById('ticks').innerHTML = ['69.7', '63.4', '57.0', '50.7', '44.4', '38.0', '31.7', '25.4', '19.0', '12.7', '6.3', '0.0'].map(t => `<li>${t}</li>`).join('');

// ---------- tower model ----------
const BLUE = '#1c1cb0', NAVY = '#16167c', DARK = '#cf6c0a', BROWN = '#a85c14';
const line = (pts, c, w = 1, extra = '') => `<polyline points="${pts.map(p => p.join()).join(' ')}" fill="none" stroke="${c}" stroke-width="${w}" ${extra}/>`;
const poly = (pts, c) => `<polygon points="${pts.map(p => p.join()).join(' ')}" fill="${c}"/>`;
// nodes of the nine-sided plan: x and vertical offset from the side level
const plan = [[174, 0], [187, -17], [236, -27], [299, -27], [347, -17], [360, 0], [327, 15], [267, 20], [208, 15]];
const at = (i, y) => [plan[(i + 9) % 9][0], y + plan[(i + 9) % 9][1]];
const levels = [190, 215, 239, 263, 301, 345, 390, 435, 482];

function column(i, x, w, c, top, bottom) {
  return `<rect x="${x - w / 2}" y="${top}" width="${w}" height="${bottom - top}" fill="${c}"/>`
    + line([[x + w / 2 - 1, top], [x + w / 2 - 1, bottom]], DARK, 1, 'opacity=".5"')
    + `<rect x="${x - 1.5}" y="${bottom}" width="3" height="9" fill="${NAVY}"/>`
    + line([[x - 3, bottom + 9], [x + 3, bottom + 9]], '#50d860', 1);
}
function bracing() {
  let s = '';
  for (let k = 0; k < levels.length - 1; k++) for (let i = 0; i < 9; i++) {
    s += line([at(i, levels[k]), at(i + 1, levels[k + 1])], '#4444b4', .6, 'stroke-dasharray="3 1" opacity=".75"')
      + line([at(i + 1, levels[k]), at(i, levels[k + 1])], '#4444b4', .6, 'stroke-dasharray="3 1" opacity=".75"');
  }
  return s;
}
const ringBack = y => line([at(0, y), at(1, y), at(2, y), at(3, y), at(4, y), at(5, y)], NAVY, 1.5);
const ringFront = y => line([[172, y], at(8, y), at(7, y), at(6, y), [362, y]], BLUE, 1.7);

const outer = [[173, 181], [186, 163], [235, 152.5], [299, 152.5], [350, 163], [361, 181], [328, 195], [267, 200], [207, 195]];
const inner = [[195, 178], [210, 167], [243, 160], [292, 160], [328, 167], [341, 178], [312, 189], [267, 192], [225, 188]];
const mix = (a, b, t) => [a[0] + (b[0] - a[0]) * t, a[1] + (b[1] - a[1]) * t];
function roof(c, w, solid = true) {
  let s = '';
  for (const t of [0, .3, .65, 1]) { const p = outer.map((o, i) => mix(o, inner[i], t)); s += line([...p, p[0]], c, w); }
  outer.forEach((o, i) => {
    s += line([o, inner[i]], c, w);
    if (i === 2) s += poly([outer[2], outer[3], inner[3], inner[2]], c);
    if (solid && (i === 6 || i === 7)) s += poly([mix(o, inner[i], .3), mix(outer[i + 1], inner[i + 1], .3), mix(outer[i + 1], inner[i + 1], .9), mix(o, inner[i], .9)], c);
  });
  for (let t = 0; t < 1; t += .13) s += line([mix([272, 176], [325, 190], t), mix([290, 176], [352, 180], t)], c, w);
  return s + line([[268, 176], [350, 179]], c, 1.6) + line([[270, 176], [322, 190]], c, 1.6)
    + line([[299, 155], [330, 190]], c, w) + line([[292, 160], [318, 188]], c, w);
}
// one storey of the spiral ramp
function stair(y, c, c2) {
  let s = line([[188, y - 14], [205, y - 19], [236, y - 24]], c2, 2.5) + line([[299, y - 18], [325, y - 8], [347, y + 2]], c2, 4);
  for (let k = 0; k < 5; k++) s += line([[192 + k * 4, y - 4 + k], [199 + k * 4, y - 14 + k]], c, 1.6);
  for (let k = 0; k < 8; k++) s += line([[328 + k * 2.5, y - 20 + k], [339 + k * 2, y - 6 + k]], c, 1.3) + line([[306 + k * 4, y - 4 - k * 1.5], [318 + k * 3, y - 12 - k]], c, 1.4);
  s += poly([[190, y - 9], [222, y - 3], [267, y - 2], [300, y - 7], [345, y - 21], [347, y - 15], [301, y], [267, y + 5], [222, y + 3], [190, y - 4]], c);
  s += line([[192, y - 6], [222, y], [267, y + 1], [301, y - 4], [345, y - 18]], DARK, .9);
  return s + line([[176, y - 10], [186, y - 11]], BLUE, 1.2) + line([[346, y - 9], [357, y - 8]], BLUE, 1.2);
}
function tower(mid = '', ramp = '#e88614', side = '#ee8a1a') {
  let s = column(2, 236, 5, '#e8820e', 154, 449) + column(3, 299, 5, '#e8820e', 154, 449);
  s += mid + bracing();
  [345, 390, 435].forEach(y => s += ringBack(y));
  s += column(1, 187, 8, '#e07c12', 164, 459) + column(4, 347, 8, '#e07c12', 164, 459);
  [204, 225, 249, 273, 296].forEach(y => s += stair(y, ramp, '#d87410'));
  for (let k = 0; k < 8; k++) s += line([[278 + k * 5, 300 + k * 1.5], [296 + k * 5, 297 + k]], BLUE, 2);
  s += line([[275, 299], [323, 313]], BLUE, 1.5) + line([[302, 274], [328, 278]], BLUE, 1);
  s += column(0, 176, 8, BROWN, 182, 475) + column(5, 358, 8, side, 182, 475);
  s += column(8, 207.5, 7, '#e67f0c', 196, 490) + column(6, 326.5, 7, '#ff9418', 196, 490);
  [301, 345, 390, 435].forEach(y => s += ringFront(y));
  s += `<rect x="264.500" y="196" width="6" height="284" fill="${BLUE}"/><rect x="266.500" y="202" width="2" height="276" fill="#8c4a20"/>`;
  s += line([[267, 478], [267, 503]], BLUE, 1.5) + line([[264, 504], [270, 504]], '#30b070', 1.2);
  s += roof(BLUE, 1.4) + `<rect x="264.500" y="150" width="6" height="50" fill="${BLUE}"/>`;
  return s;
}
function ground(dx) {
  let s = poly([[120, 420], [200, 392], [410, 430], [410, 553], [350, 553], [120, 522]].map(p => [p[0] + dx, p[1]]), '#fbfbfb');
  for (let k = 0; k < 6; k++) {
    s += line([[120 + dx, 420 + k * 21], [410 + dx, 464 + k * 18]], '#ececec', .7);
    s += line([[120 + dx + k * 52, 545], [300 + dx + k * 40, 410 + k * 9]], '#efefef', .7);
  }
  return s;
}
const axes = (x, y) => line([[x, y], [x + 18, y + 3]], '#e01010', 1.2) + poly([[x + 14, y], [x + 21, y + 3], [x + 14, y + 5]], '#d01010')
  + line([[x + 23, y + 2], [x + 27, y + 6]], '#e05050', .8) + line([[x + 27, y + 2], [x + 23, y + 6]], '#e05050', .8)
  + line([[x, y], [x - 8, y + 4]], '#10c010', 1.4) + poly([[x - 6, y + 1], [x - 12, y + 6], [x - 4, y + 6]], '#10c010');
const TEAL = '#359a98';

document.getElementById('modelA').innerHTML = ground(0)
  + line([[120, 453], [409, 497]], TEAL, .9) + line([[151, 528], [384, 424]], TEAL, .9)
  + tower() + axes(267, 476);

// Deformed shape: each member is a chain of coloured pieces [x, y, colour of the piece that starts here]
const R = '#ff0000', Y = '#ffff00', G = '#00ff00', C = '#00f4f4', B = '#0000f0';
const chain = (pts, w) => pts.slice(0, -1).map((p, i) => line([[p[0], p[1]], [pts[i + 1][0], pts[i + 1][1]]], p[2], w)).join('');
const T = s => `<g transform="translate(316 5.700) scale(1 .99)">${s}</g>`;
const back = g => `<g transform="translate(-316 -5.700)">${g}</g>`;
const deformedBack =
  chain([[566, 152, R], [566, 168, Y], [560, 280, G], [558, 320, C], [555, 412, B], [553, 452]], 6)
  + chain([[628, 152, R], [626, 195, G], [622, 232, C], [618, 378, B], [614, 452]], 4)
  + chain([[507, 165, R], [506, 237, Y], [503, 338, G], [502, 387, C], [498, 450, B], [495, 472]], 8)
  + chain([[681, 165, R], [680, 210, Y], [675, 325, G], [670, 380, C], [664, 430, B], [662, 458]], 5);
const deformedMid = [222, 246, 270, 294].map((y, i) =>
  chain([[522, y - 2, i ? Y : R], [548, y + 2, Y], [590, y - 2, Y], [625, y - 8, i > 1 ? G : Y], [650, y - 12, i > 1 ? G : Y], [664, y - 15]], 3)
  + chain([[524, y - 8, Y], [545, y - 3, Y], [572, y - 2]], 4)
  + chain([[606, y - 9, Y], [640, y - 15]], 2.5)
  + chain([[522, y + 3, Y], [562, y - 12, i === 3 ? G : Y], [600, y - 13]], 1)).join('');
const treads = [222, 246, 270, 294].map((y, i) => [0, 1, 2, 3, 4].map(k =>
  line([[506 + k * 5, y - 8 + k], [511 + k * 5, y - 15 + k]], i ? Y : R, 1.2)
  + line([[664 + k * 4, y - 4 - k * 2], [672 + k * 3, y - 15 - k * 2]], i > 1 ? Y : R, 1.3)).join('')).join('');
const deformedFront =
  [[306, G, C, G], [350, C, C, G], [395, C, C, '#00e08c'], [440, C, C, C]].map(([y, a, b, c]) => chain([[498, y - 8, a], [524, y + 7, b], [550, y + 14, b], [583, y + 15, b], [615, y + 13, c], [660, y + 3, c], [689, y - 7]], 1.4)).join('')
  + chain([[541, 198, Y], [536, 308, G], [533, 340, C], [528, 438, B], [524, 490]], 6)
  + chain([[661, 188, R], [657, 270, Y], [652, 372, G], [648, 410, C], [644, 470, B], [642, 490]], 5)
  + chain([[695, 178, R], [687, 245, Y], [685, 361, G], [685, 398, C], [684, 424, C], [680, 454, B], [675, 476]], 6)
  + chain([[601, 193, R], [598, 230, Y], [596, 294, G], [590, 340, C]], 7)
  + chain([[596, 305, C], [588, 432, B], [584, 498]], 5);
const redRoof = `<g transform="translate(348 -4) scale(.96 1)">${roof(R, 1.6, false)}</g>`;
const struts = [213, 222, 237, 262, 272, 286].map((y, i) => line([[662, y + 4], [674 + i % 2 * 12, y - 4], [683, y]], i > 3 ? Y : R, 1.6)).join('')
  + [205, 216, 225].map(y => line([[510, y + 8], [522, y - 4], [548, y + 6]], R, 1.3)).join('');
const blueRoof = line([...outer, outer[0]], BLUE, 1.5) + line([...inner, inner[0]], BLUE, 1.3)
  + [5, 6, 7, 8].map(i => line([mix(outer[i], inner[i], .4), mix(outer[(i + 1) % 9], inner[(i + 1) % 9], .4)], BLUE, 4)).join('')
  + outer.map((o, i) => line([o, inner[i]], BLUE, 1.2)).join('')
  + line([[268, 176], [350, 179]], BLUE, 1.6) + line([[270, 176], [322, 190]], BLUE, 1.6)
  + `<rect x="264.500" y="150" width="6" height="50" fill="${BLUE}"/>`;
// column feet, where the undeformed and deformed members overlap
const feet = [[492, 462, 8], [674, 462, 8], [524, 470, 6], [642, 466, 6], [504, 442, 5], [662, 444, 6], [552, 428, 4], [615, 430, 4]]
  .map(([x, y, w]) => `<rect x="${x - w / 2}" y="${y}" width="${w}" height="18" fill="#b45c34"/>`).join('');

document.getElementById('modelB').innerHTML = ground(300)
  + line([[420, 452], [709, 496]], TEAL, .9) + line([[468, 528], [698, 425]], TEAL, .9)
  + deformedBack + T(tower(back(deformedMid), '#d87a10', '#dc7c14')) + deformedMid + deformedFront + treads + struts
  + T(column(6, 326.5, 6, '#f08c1c', 198, 490) + column(8, 207.5, 6, '#cc7010', 198, 490) + [301, 345, 390, 435].map(ringFront).join('')
    + `<rect x="264.500" y="198" width="5" height="280" fill="${BLUE}"/>` + line([[267, 478], [267, 503]], BLUE, 1.5))
  + feet + redRoof + T(blueRoof)
  + `<rect x="598.500" y="141" width="6" height="55" fill="${R}"/>`
  + axes(583, 477);
```
